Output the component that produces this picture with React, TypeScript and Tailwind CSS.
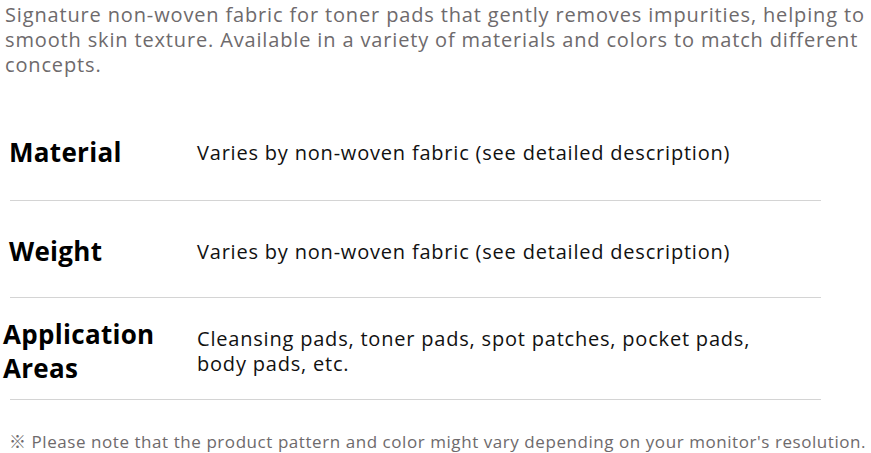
const rows = [
  { label: ['Material'], value: 'Varies by non-woven fabric (see detailed description)', h: 'h-[97px] pt-0', shift: '-ml-px' },
  { label: ['Weight'], value: 'Varies by non-woven fabric (see detailed description)', h: 'h-[97px] pt-[4px]', shift: '-ml-px' },
  {
    label: ['Application', 'Areas'],
    value: 'Cleansing pads, toner pads, spot patches, pocket pads, body pads, etc.',
    h: 'h-[102px] pt-[4px]',
    shift: '-ml-[7px]',
  },
]

export default function App() {
  return (
    <div className="h-[453px] w-[871px] overflow-hidden bg-white font-['Open_Sans','Noto_Sans_CJK_KR',sans-serif]">
      <p className="px-[5px] pt-[2px] text-[20px] leading-[25px] tracking-[0.85px] text-[#6e6a6c]">
        Signature non-woven fabric for toner pads that gently removes impurities, helping to smooth skin texture.
        Available in a variety of materials and colors to match different concepts.
      </p>

      <div className="mt-[27px] ml-[10px] w-[811px]">
        {rows.map((row) => (
          <div key={row.label[0]} className={`flex items-center border-b border-[#d4d4d4] ${row.h}`}>
            <div className="w-[187px] shrink-0">
              <div className={`text-[26px] font-bold leading-[34px] tracking-[0.3px] text-black ${row.shift}`}>
                {row.label.map((l) => (
                  <div key={l}>{l}</div>
                ))}
              </div>
            </div>
            <div className="mt-[1px] max-w-[570px] text-[20px] leading-[25px] tracking-[0.8px] text-[#111]">{row.value}</div>
          </div>
        ))}
      </div>

      <p className="mt-[29px] whitespace-nowrap pl-[9px] text-[17px] leading-[25px] tracking-[0.56px] text-[#6e6a6c]">
        ※ Please note that the product pattern and color might vary depending on your monitor's resolution.
      </p>
    </div>
  )
}
